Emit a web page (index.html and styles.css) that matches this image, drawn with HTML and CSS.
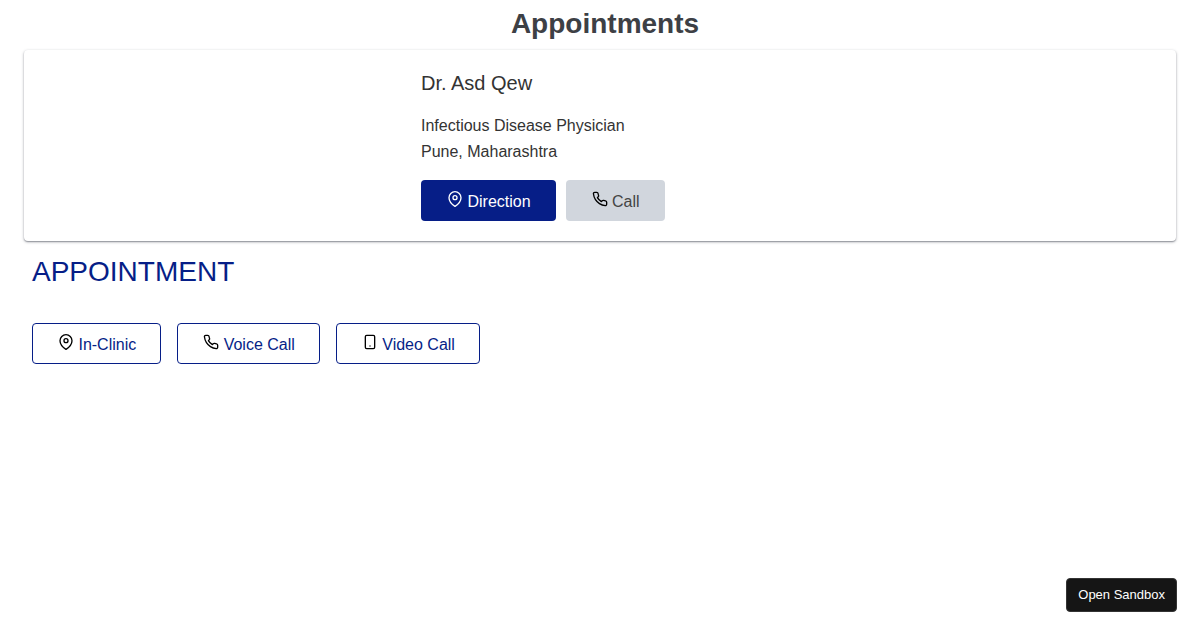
FILE: index.html
```html
<!DOCTYPE html>
<html lang="en">
<head>
<meta charset="utf-8">
<meta name="viewport" content="width=device-width, initial-scale=1">
<title>Appointments</title>
<link rel="stylesheet" href="styles.css">
</head>
<body>
<svg class="sprite" aria-hidden="true">
  <symbol id="pin" viewBox="0 0 24 24"><path d="M21 10c0 7-9 13-9 13s-9-6-9-13a9 9 0 0 1 18 0z"/><circle cx="12" cy="10" r="3"/></symbol>
  <symbol id="phone" viewBox="0 0 24 24"><path d="M22 16.92v3a2 2 0 0 1-2.18 2 19.79 19.79 0 0 1-8.63-3.07 19.5 19.5 0 0 1-6-6 19.79 19.79 0 0 1-3.07-8.67A2 2 0 0 1 4.11 2h3a2 2 0 0 1 2 1.72 12.84 12.84 0 0 0 .7 2.81 2 2 0 0 1-.45 2.11L8.09 9.91a16 16 0 0 0 6 6l1.27-1.27a2 2 0 0 1 2.11-.45 12.84 12.84 0 0 0 2.81.7A2 2 0 0 1 22 16.92z"/></symbol>
  <symbol id="mobile" viewBox="0 0 24 24"><rect x="5" y="2" width="14" height="20" rx="2" ry="2"/><path d="M12 18h.01"/></symbol>
</svg>
<main class="page">
  <h1 class="title">Appointments</h1>
  <section class="card">
    <div class="doctor">
      <h2 class="name">Dr. Asd Qew</h2>
      <p class="detail">Infectious Disease Physician</p>
      <p class="detail">Pune, Maharashtra</p>
      <div class="actions">
        <button class="btn btn-primary" type="button"><svg class="icon"><use href="#pin"/></svg> Direction</button>
        <button class="btn btn-muted" type="button"><svg class="icon icon-dark"><use href="#phone"/></svg> Call</button>
      </div>
    </div>
  </section>
  <section class="booking">
    <h2 class="heading">APPOINTMENT</h2>
    <div class="modes">
      <button class="btn btn-outline" type="button"><svg class="icon icon-dark"><use href="#pin"/></svg> In-Clinic</button>
      <button class="btn btn-outline" type="button"><svg class="icon icon-dark"><use href="#phone"/></svg> Voice Call</button>
      <button class="btn btn-outline" type="button"><svg class="icon icon-dark"><use href="#mobile"/></svg> Video Call</button>
    </div>
  </section>
</main>
<button class="sandbox" type="button">Open Sandbox</button>
</body>
</html>
```
FILE: styles.css
```css
* {
  box-sizing: border-box;
}
body {
  margin: 0;
  background: #fff;
  color: #333;
  font: 16px/26px Helvetica, "Liberation Sans", Arial, sans-serif;
}
h1, h2, p {
  margin: 0;
}
.sprite {
  position: absolute;
  width: 0;
  height: 0;
}
.page {
  padding: 6px 24px 24px;
}
.title {
  padding-left: 10px;
  margin-bottom: 8px;
  color: #3d4045;
  font-size: 28px;
  line-height: 36px;
  text-align: center;
}
.card {
  display: grid;
  grid-template-columns: repeat(3, 1fr);
  border-radius: 4px;
  background: #fff;
  box-shadow: 0 1px 3px rgba(50, 54, 68, 0.4), 0 1px 1px rgba(50, 54, 68, 0.3);
}
.doctor {
  grid-column: 2;
  padding: 20px 13px;
}
.name {
  margin-bottom: 17px;
  font-size: 20px;
  font-weight: 400;
  line-height: 26px;
}
.actions {
  display: flex;
  gap: 10px;
  margin-top: 15px;
}
.btn {
  padding: 8px 24px 6px 25px;
  border: 1px solid transparent;
  border-radius: 4px;
  font: inherit;
  line-height: 25px;
  white-space: nowrap;
  cursor: pointer;
}
.btn-primary {
  background: #061e87;
  color: #fff;
}
.btn-muted {
  background: #d1d6dd;
  color: #444;
}
.btn-outline {
  border-color: #061e87;
  background: #fff;
  color: #061e87;
}
.icon {
  width: 16px;
  height: 16px;
  fill: none;
  stroke: currentColor;
  stroke-width: 2;
  stroke-linecap: round;
  stroke-linejoin: round;
}
.icon-dark {
  color: #000;
}
.booking {
  padding: 13px 8px;
}
.heading {
  margin-bottom: 33px;
  color: #061e87;
  font-size: 28px;
  font-weight: 400;
  line-height: 36px;
}
.modes {
  display: flex;
  flex-wrap: wrap;
  gap: 16px;
}
.sandbox {
  position: fixed;
  right: 23px;
  bottom: 18px;
  padding: 8px 11px;
  border: 1px solid #343434;
  border-radius: 4px;
  background: #151515;
  color: #fff;
  font: 13px/16px Helvetica, "Liberation Sans", Arial, sans-serif;
  cursor: pointer;
}
```
